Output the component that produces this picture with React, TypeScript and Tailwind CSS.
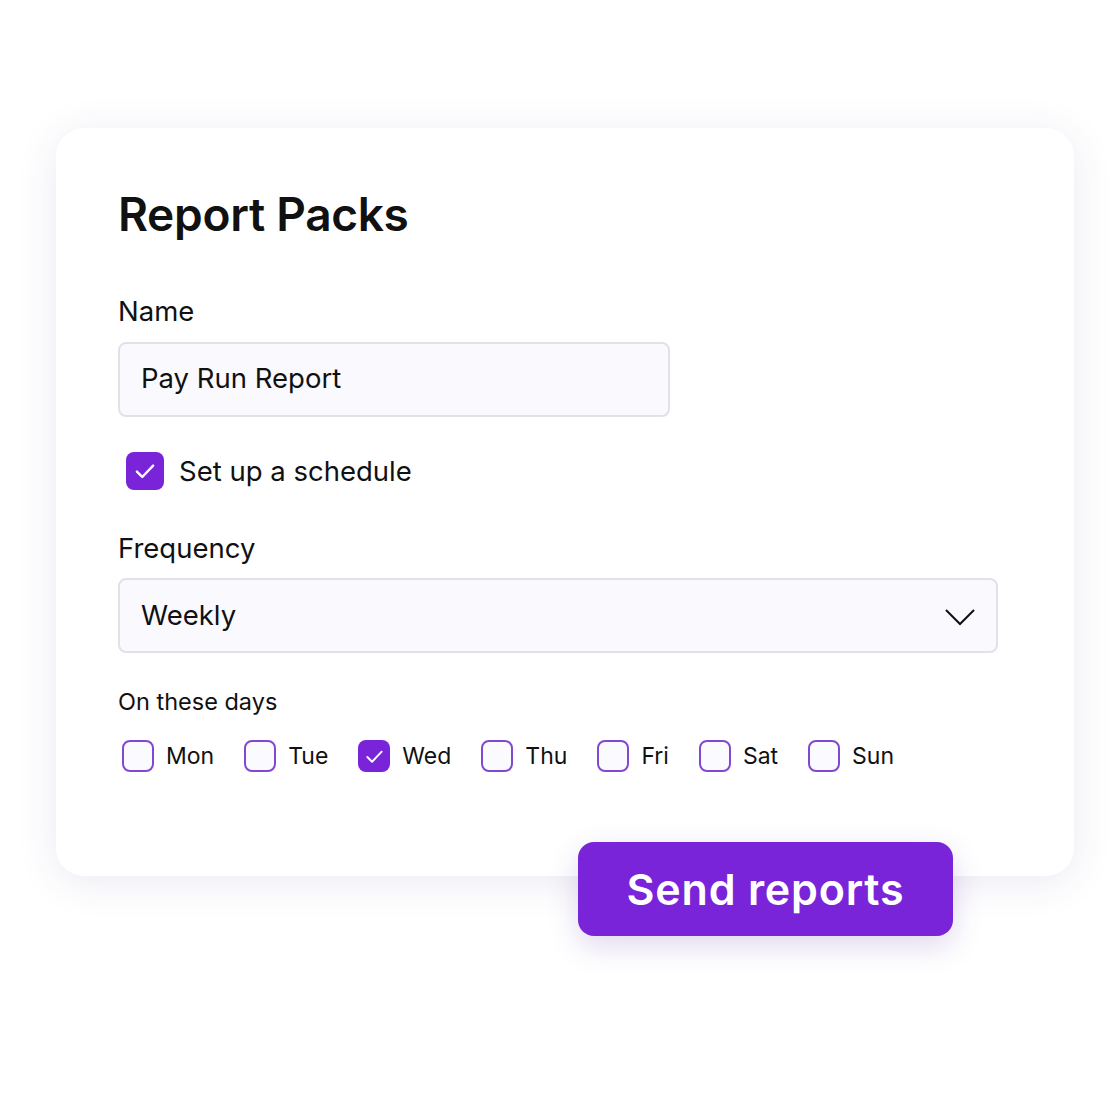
import { useState } from 'react'

const days = ['Mon', 'Tue', 'Wed', 'Thu', 'Fri', 'Sat', 'Sun']

function Check({ size, checked }: { size: 'lg' | 'sm'; checked: boolean }) {
  const box = size === 'lg' ? 'w-[38px] h-[38px] rounded-[8px]' : 'w-[32px] h-[32px] rounded-[8px]'
  return (
    <span
      className={
        box +
        ' flex items-center justify-center shrink-0 ' +
        (checked ? 'bg-[#7a24d9]' : 'bg-[#fbfaff] border-2 border-[#8049d0]')
      }
    >
      {checked && (
        <svg
          viewBox="0 0 24 24"
          className={size === 'lg' ? 'w-[26px] h-[26px]' : 'w-[23px] h-[23px]'}
          fill="none"
          stroke="white"
          strokeWidth={size === 'lg' ? 2.2 : 2}
          strokeLinecap="round"
          strokeLinejoin="round"
        >
          <path d="M4.5 12.5l5 5L19.5 7" />
        </svg>
      )}
    </span>
  )
}

export default function App() {
  const [name] = useState('Pay Run Report')
  const [selected] = useState(['Wed'])

  return (
    <div className="w-[1120px] h-[1120px] bg-white pt-[128px] font-['Inter',sans-serif] text-[#111]">

      {/* CARD */}

      <div className="ml-[56px] w-[1018px] h-[748px] rounded-[28px] bg-white shadow-[0_6px_40px_rgba(60,40,120,0.10)] pl-[62px] pt-[58px]">

        <h1 className="text-[46px] font-semibold tracking-[-0.3px] leading-none h-[56px] flex items-center">
          Report Packs
        </h1>

        <div className="mt-[56px] text-[27.5px] leading-none">Name</div>

        <div className="mt-[16px] w-[552px] h-[75px] rounded-[8px] border-2 border-[#e2e2e6] bg-[#fafafe] flex items-center pl-[21px] text-[27.5px]">
          {name}
        </div>

        <div className="mt-[34px] ml-[8px] flex items-center gap-[15px]">
          <Check size="lg" checked />
          <span className="text-[27.5px]">Set up a schedule</span>
        </div>

        <div className="mt-[43px] text-[27.5px] leading-none">Frequency</div>

        <div className="mt-[16px] w-[880px] h-[75px] rounded-[8px] border-2 border-[#e2e2e6] bg-[#fafafe] flex items-center justify-between pl-[21px] pr-[20px] text-[27.5px]">
          <span>Weekly</span>
          <svg viewBox="0 0 32 20" className="w-[32px] h-[20px]" fill="none" stroke="#111" strokeWidth="2">
            <path d="M2 4l14 14L30 4" />
          </svg>
        </div>

        <div className="mt-[37px] text-[23.5px] leading-none">On these days</div>

        <div className="mt-[25px] ml-[4px] flex items-center">
          {days.map((d) => (
            <div key={d} className="flex items-center gap-[12px] mr-[30px]">
              <Check size="sm" checked={selected.includes(d)} />
              <span className="text-[23px]">{d}</span>
            </div>
          ))}
        </div>

      </div>

      {/* BUTTON */}

      <button className="ml-[578px] -mt-[34px] w-[375px] h-[94px] rounded-[16px] bg-[#7a24d9] text-white text-[43px] font-semibold tracking-[0.8px] shadow-[0_10px_30px_rgba(80,40,160,0.18)] flex items-center justify-center relative">
        Send reports
      </button>

    </div>
  )
}
